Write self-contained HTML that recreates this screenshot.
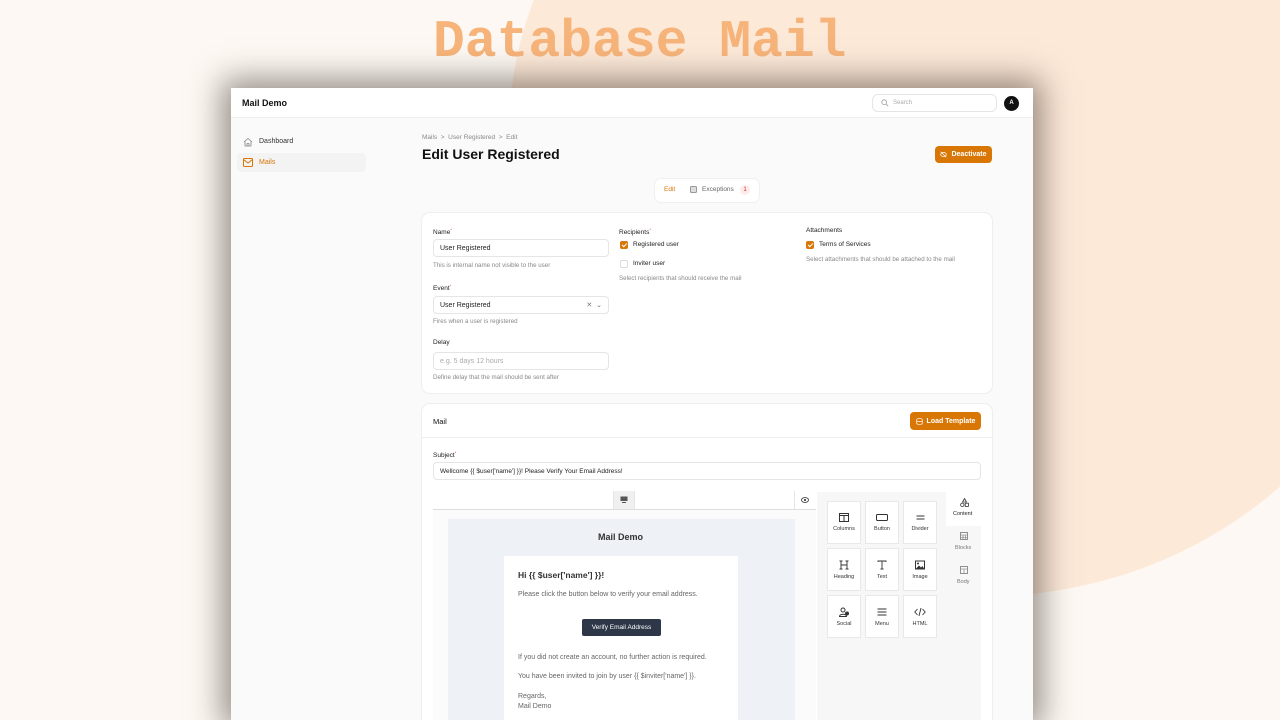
<!DOCTYPE html>
<html style="overflow:hidden"><head><meta charset="utf-8"><style>
*{box-sizing:border-box;margin:0;padding:0}
html,body{width:1280px;height:720px;overflow:hidden}
body{background:#fdf8f3;font-family:"Liberation Sans",sans-serif;position:relative;color:#111}
.blob{position:absolute;left:520px;top:-260px;width:900px;height:860px;border-radius:45% 40% 50% 55%;background:#fde9d8;transform:rotate(-12deg)}
.title{position:absolute;left:433px;top:12px;font-family:"Liberation Mono",monospace;font-weight:bold;font-size:53px;color:#f7b47a}
.win{position:absolute;left:231px;top:88px;width:802px;height:632px;overflow:hidden;background:#fafafa;box-shadow:0 0 30px 8px rgba(60,50,40,.55)}
.hdr{height:30px;background:#fff;border-bottom:1px solid #eee;position:relative}
.a{position:absolute;font-size:8px;color:#333;white-space:nowrap}
.g{color:#888}
.inp{position:absolute;background:#fff;border:1px solid #e5e5e5;border-radius:4px;font-size:7px;padding-left:6px;display:flex;align-items:center;color:#222}
.card{position:absolute;background:#fff;border-radius:8px;box-shadow:0 0 0 1px #eee}
.cb{position:absolute;width:8px;height:8px;border-radius:2px;background:#d97706}
.cb:after{content:"";position:absolute;left:2.5px;top:1px;width:2px;height:4px;border:solid #fff;border-width:0 1px 1px 0;transform:rotate(45deg)}
.btn{position:absolute;background:#d97706;border-radius:4px;color:#fff;font-size:7px;font-weight:bold;display:flex;align-items:center;justify-content:center;gap:4px}
.tile{position:absolute;width:34px;height:43px;background:#fff;border:1px solid #e8e8e8;font-size:5.5px;color:#333;text-align:center}
.tile svg{display:block;margin:11px auto 4px}
</style></head><body>
<div class="blob"></div>
<div class="title">Database Mail</div>
<div class="win">
 <div class="hdr">
  <div class="a" style="left:11px;top:10px;font-size:9px;font-weight:bold;color:#111">Mail Demo</div>
  <div class="inp" style="left:641px;top:6px;width:125px;height:18px;border-radius:6px;color:#aaa;font-size:6px;padding-left:8px"><svg width="8" height="8" viewBox="0 0 10 10" style="margin-right:4px"><circle cx="4" cy="4" r="3" fill="none" stroke="#999" stroke-width="1"/><path d="M6.5 6.5L9 9" stroke="#999"/></svg>Search</div>
  <div style="position:absolute;left:773px;top:8px;width:15px;height:15px;border-radius:50%;background:#111;color:#fff;font-size:6px;font-weight:bold;text-align:center;line-height:15px">A</div>
 </div>
 <svg style="position:absolute;left:12px;top:49px" width="10" height="10" viewBox="0 0 10 10"><path d="M1 5L5 1.5 9 5M2 4.5V9h6V4.5M4 9V6.5h2V9" fill="none" stroke="#888" stroke-width=".8"/></svg>
 <div class="a" style="left:28px;top:50px;font-size:7px">Dashboard</div>
 <div style="position:absolute;left:6px;top:65px;width:129px;height:19px;background:#f3f3f3;border-radius:4px"></div>
 <svg style="position:absolute;left:12px;top:70px" width="10" height="9" viewBox="0 0 10 9"><rect x=".5" y=".5" width="9" height="8" rx="1" fill="none" stroke="#d97706"/><path d="M.5 1.5L5 5l4.5-3.5" fill="none" stroke="#d97706"/></svg>
 <div class="a" style="left:28px;top:71px;font-size:7px;color:#d97706">Mails</div>
 <div class="a g" style="left:191px;top:46px;font-size:6.5px">Mails &nbsp;&gt;&nbsp; User Registered &nbsp;&gt;&nbsp; Edit</div>
 <div class="a" style="left:191px;top:58px;font-size:14px;font-weight:bold;color:#111">Edit User Registered</div>
 <div class="btn" style="left:704px;top:58px;width:57px;height:17px"><svg width="7" height="7" viewBox="0 0 10 10"><ellipse cx="5" cy="5" rx="4" ry="3" fill="none" stroke="#fff"/><path d="M1 1l8 8" stroke="#fff"/></svg>Deactivate</div>
 <div style="position:absolute;left:424px;top:91px;width:104px;height:23px;background:#fff;border-radius:6px;box-shadow:0 0 0 1px #f0f0f0"></div>
 <div class="a" style="left:433px;top:98px;font-size:6.5px;color:#d97706">Edit</div>
 <div style="position:absolute;left:459px;top:98px;width:7px;height:7px;border:1px solid #999;border-radius:1.5px;background:#ddd"></div>
 <div class="a g" style="left:471px;top:98px;font-size:6.5px;color:#666">Exceptions</div>
 <div style="position:absolute;left:509px;top:97px;width:10px;height:10px;border-radius:50%;background:#fdecec;color:#dc2626;font-size:6px;text-align:center;line-height:10px">1</div>

 <div class="card" style="left:191px;top:125px;width:570px;height:180px"></div>
 <div class="a" style="left:202px;top:139px;font-size:6.5px;color:#222">Name<sup style="color:#e11d48;font-size:4px">*</sup></div>
 <div class="inp" style="left:202px;top:151px;width:176px;height:18px">User Registered</div>
 <div class="a g" style="left:202px;top:174px;font-size:6.2px">This is internal name not visible to the user</div>
 <div class="a" style="left:202px;top:195px;font-size:6.5px;color:#222">Event<sup style="color:#e11d48;font-size:4px">*</sup></div>
 <div class="inp" style="left:202px;top:208px;width:176px;height:18px">User Registered<span style="position:absolute;right:6px;color:#777">✕ &nbsp;⌄</span></div>
 <div class="a g" style="left:202px;top:230px;font-size:6.2px">Fires when a user is registered</div>
 <div class="a" style="left:202px;top:251px;font-size:6.5px;color:#222">Delay</div>
 <div class="inp" style="left:202px;top:264px;width:176px;height:18px;color:#aaa">e.g. 5 days 12 hours</div>
 <div class="a g" style="left:202px;top:286px;font-size:6.2px">Define delay that the mail should be sent after</div>
 <div class="a" style="left:388px;top:139px;font-size:6.5px;color:#222">Recipients<sup style="color:#e11d48;font-size:4px">*</sup></div>
 <div class="cb" style="left:389px;top:153px"></div>
 <div class="a" style="left:402px;top:153px;font-size:6.5px;color:#222">Registered user</div>
 <div style="position:absolute;left:389px;top:172px;width:8px;height:8px;border:1px solid #ddd;border-radius:2px;background:#fff"></div>
 <div class="a" style="left:402px;top:172px;font-size:6.5px;color:#222">Inviter user</div>
 <div class="a g" style="left:388px;top:187px;font-size:6.2px">Select recipients that should receive the mail</div>
 <div class="a" style="left:575px;top:139px;font-size:6.5px;color:#222">Attachments</div>
 <div class="cb" style="left:575px;top:153px"></div>
 <div class="a" style="left:588px;top:153px;font-size:6.5px;color:#222">Terms of Services</div>
 <div class="a g" style="left:575px;top:168px;font-size:6.2px">Select attachments that should be attached to the mail</div>

 <div class="card" style="left:191px;top:316px;width:570px;height:340px"></div>
 <div style="position:absolute;left:191px;top:349px;width:570px;height:1px;background:#eee"></div>
 <div class="a" style="left:202px;top:329px;font-size:7.5px;color:#111">Mail</div>
 <div class="btn" style="left:679px;top:324px;width:71px;height:18px"><svg width="7" height="7" viewBox="0 0 10 10"><rect x="1" y="1" width="8" height="8" rx="2" fill="none" stroke="#fff"/><path d="M1 5h8" stroke="#fff"/></svg>Load Template</div>
 <div class="a" style="left:202px;top:362px;font-size:6.5px;color:#222">Subject<sup style="color:#e11d48;font-size:4px">*</sup></div>
 <div class="inp" style="left:202px;top:374px;width:548px;height:18px;font-size:6.5px">Wellcome {{ $user['name'] }}! Please Verify Your Email Address!</div>
 <div style="position:absolute;left:202px;top:421px;width:383px;height:1px;background:#ddd"></div>
 <div style="position:absolute;left:382px;top:403px;width:22px;height:18px;background:#f0f0f0;border-left:1px solid #e5e5e5;border-right:1px solid #e5e5e5"></div>
 <svg style="position:absolute;left:389px;top:408px" width="8" height="7" viewBox="0 0 8 7"><rect x=".5" y=".5" width="7" height="4.5" fill="#555"/><path d="M2 6.5h4" stroke="#555"/></svg>
 <div style="position:absolute;left:563px;top:403px;width:1px;height:18px;background:#e5e5e5"></div>
 <svg style="position:absolute;left:570px;top:409px" width="8" height="6" viewBox="0 0 8 6"><ellipse cx="4" cy="3" rx="3.5" ry="2.4" fill="none" stroke="#444" stroke-width=".9"/><circle cx="4" cy="3" r="1.1" fill="#444"/></svg>
 <div style="position:absolute;left:202px;top:422px;width:383px;height:220px;background:#fbfbfb"></div>
 <div style="position:absolute;left:217px;top:431px;width:347px;height:210px;background:#eef2f6"></div>
 <div class="a" style="left:367px;top:444px;font-size:9px;font-weight:bold;color:#333">Mail Demo</div>
 <div style="position:absolute;left:273px;top:468px;width:234px;height:180px;background:#fff"></div>
 <div class="a" style="left:287px;top:482px;font-size:8.5px;font-weight:bold;color:#333">Hi {{ $user['name'] }}!</div>
 <div class="a" style="left:287px;top:503px;font-size:7px;color:#666">Please click the button below to verify your email address.</div>
 <div style="position:absolute;left:351px;top:531px;width:79px;height:17px;background:#2d3748;border-radius:2px;color:#fff;font-size:6.5px;text-align:center;line-height:17px">Verify Email Address</div>
 <div class="a" style="left:287px;top:566px;font-size:7px;color:#666">If you did not create an account, no further action is required.</div>
 <div class="a" style="left:287px;top:585px;font-size:7px;color:#666">You have been invited to join by user {{ $inviter['name'] }}.</div>
 <div class="a" style="left:287px;top:605px;font-size:7px;color:#666">Regards,</div>
 <div class="a" style="left:287px;top:615px;font-size:7px;color:#666">Mail Demo</div>

 <div style="position:absolute;left:586px;top:404px;width:129px;height:240px;background:#f7f7f7"></div>
 <div style="position:absolute;left:715px;top:438px;width:35px;height:206px;background:#f7f7f7"></div>
 <div class="tile" style="left:596px;top:413px"><svg width="10" height="9" viewBox="0 0 10 9"><rect x=".5" y=".5" width="9" height="8" fill="none" stroke="#333"/><path d="M.5 2.5h9M5 2.5v6" stroke="#333"/></svg>Columns</div>
 <div class="tile" style="left:634px;top:413px"><svg width="12" height="9" viewBox="0 0 12 9"><rect x=".5" y="1.5" width="11" height="6" rx="1" fill="none" stroke="#333"/></svg>Button</div>
 <div class="tile" style="left:672px;top:413px"><svg width="9" height="9" viewBox="0 0 9 9"><path d="M.5 3h8M.5 6h8" stroke="#333"/></svg>Divider</div>
 <div class="tile" style="left:596px;top:460px"><svg width="10" height="10" viewBox="0 0 10 10"><path d="M2 1v8M8 1v8M2 5h6M.5 1h3M6.5 1h3M.5 9h3M6.5 9h3" stroke="#333" stroke-width=".9"/></svg>Heading</div>
 <div class="tile" style="left:634px;top:460px"><svg width="10" height="10" viewBox="0 0 10 10"><path d="M1 2V1h8v1M5 1v8M3.5 9h3" fill="none" stroke="#333" stroke-width=".9"/></svg>Text</div>
 <div class="tile" style="left:672px;top:460px"><svg width="10" height="10" viewBox="0 0 10 9"><rect x=".5" y=".5" width="9" height="8" fill="none" stroke="#333"/><path d="M1 8l3-3 2 2 1.5-1.5L9 8z" fill="#333"/><circle cx="3" cy="3" r="1" fill="#333"/></svg>Image</div>
 <div class="tile" style="left:596px;top:507px"><svg width="11" height="10" viewBox="0 0 11 10"><circle cx="4" cy="3" r="2" fill="none" stroke="#333"/><path d="M.5 9.5c0-3 7-3 7 0z" fill="none" stroke="#333"/><circle cx="8" cy="6.5" r="2" fill="#333"/></svg>Social</div>
 <div class="tile" style="left:634px;top:507px"><svg width="10" height="10" viewBox="0 0 10 9"><path d="M.5 1.5h9M.5 4.5h9M.5 7.5h9" stroke="#333"/></svg>Menu</div>
 <div class="tile" style="left:672px;top:507px"><svg width="12" height="10" viewBox="0 0 12 10"><path d="M3.5 2L.8 5l2.7 3M8.5 2l2.7 3-2.7 3M7 1L5 9" fill="none" stroke="#333" stroke-width=".9"/></svg>HTML</div>
 <div style="position:absolute;left:715px;top:404px;width:35px;height:34px;background:#fff"></div>
 <svg style="position:absolute;left:729px;top:410px" width="9" height="9" viewBox="0 0 9 9"><path d="M4.5 .5L6.5 4h-4z" fill="none" stroke="#333" stroke-width=".8"/><circle cx="2.3" cy="6.8" r="1.7" fill="none" stroke="#333" stroke-width=".8"/><rect x="5.2" y="5.2" width="3.2" height="3.2" fill="none" stroke="#333" stroke-width=".8"/></svg>
 <div class="a" style="left:722px;top:423px;font-size:5.5px;color:#222">Content</div>
 <svg style="position:absolute;left:729px;top:444px" width="8" height="8" viewBox="0 0 8 8"><rect x=".5" y=".5" width="7" height="7" fill="none" stroke="#777" stroke-width=".8"/><path d="M.5 3h7M.5 5.5h7M3 3v4.5M5.5 3v4.5" stroke="#777" stroke-width=".6"/></svg>
 <div class="a" style="left:724px;top:457px;font-size:5.5px;color:#777">Blocks</div>
 <svg style="position:absolute;left:729px;top:478px" width="8" height="8" viewBox="0 0 8 8"><rect x=".5" y=".5" width="7" height="7" fill="none" stroke="#777" stroke-width=".8"/><path d="M.5 3h7M4 3v4.5" stroke="#777" stroke-width=".6"/></svg>
 <div class="a" style="left:726px;top:491px;font-size:5.5px;color:#777">Body</div>
</div>
</body></html>
